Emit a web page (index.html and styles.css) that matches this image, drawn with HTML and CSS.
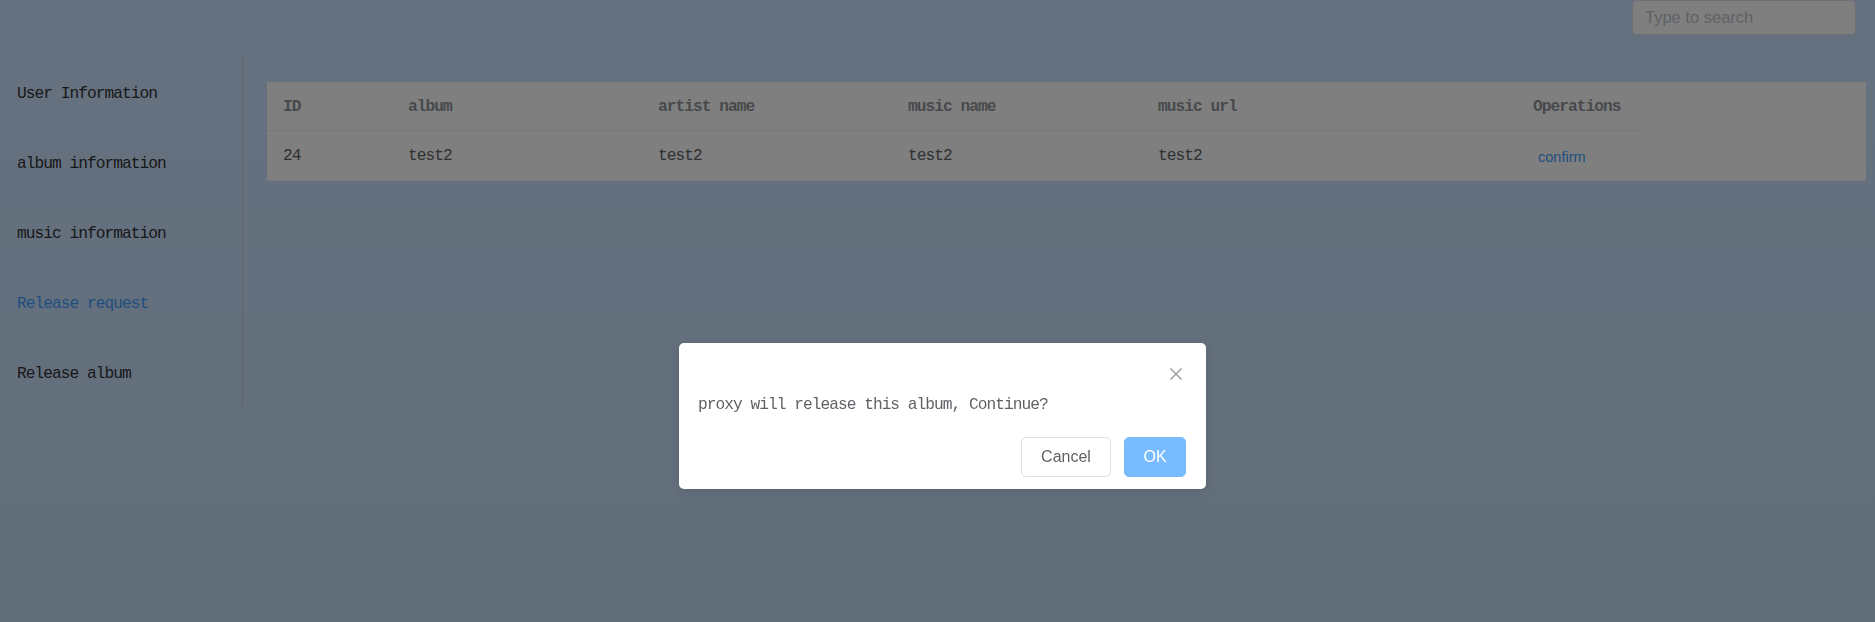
FILE: index.html
```html
<!DOCTYPE html>
<html lang="en">
<head>
<meta charset="utf-8">
<title>Release request</title>
<link rel="stylesheet" href="styles.css">
</head>
<body>
<div class="page">
  <header class="topbar">
    <input class="search" type="text" placeholder="Type to search">
  </header>
  <div class="main">
    <nav class="menu">
      <div class="menu-item">User Information</div>
      <div class="menu-item">album information</div>
      <div class="menu-item">music information</div>
      <div class="menu-item active">Release request</div>
      <div class="menu-item">Release album</div>
    </nav>
    <section class="content">
      <div class="table-wrap">
        <table class="data-table">
          <colgroup>
            <col class="c-id"><col class="c-mid"><col class="c-mid"><col class="c-mid"><col class="c-wide"><col class="c-id">
          </colgroup>
          <thead>
            <tr><th>ID</th><th>album</th><th>artist name</th><th>music name</th><th>music url</th><th>Operations</th></tr>
          </thead>
          <tbody>
            <tr><td>24</td><td>test2</td><td>test2</td><td>test2</td><td>test2</td><td><span class="link-btn">confirm</span></td></tr>
          </tbody>
        </table>
      </div>
    </section>
  </div>
</div>

<div class="overlay">
  <div class="msgbox">
    <div class="msgbox-header">
      <span class="close" aria-label="Close">
        <svg width="12" height="12" viewBox="0 0 12 12"><path d="M0.5 0.5 L11.5 11.5 M11.5 0.5 L0.5 11.5" stroke="#909399" stroke-width="1.2" fill="none"/></svg>
      </span>
    </div>
    <div class="msgbox-message">proxy will release this album, Continue?</div>
    <div class="msgbox-btns">
      <button class="btn btn-default">Cancel</button>
      <button class="btn btn-primary">OK</button>
    </div>
  </div>
</div>
</body>
</html>
```

FILE: styles.css
```css
html, body {
  margin: 0;
  padding: 0;
  height: 100%;
}
body {
  font-family: "Liberation Mono", "DejaVu Sans Mono", monospace;
  background: linear-gradient(180deg, #cbe3fe 0%, #c6dcf6 100%);
  color: #303133;
  overflow: hidden;
}
.page {
  height: 622px;
}
.topbar {
  height: 57px;
  display: flex;
  justify-content: flex-end;
  align-items: flex-start;
  padding-right: 19px;
}
.search {
  box-sizing: border-box;
  width: 224px;
  height: 35px;
  margin: 0;
  border: 1px solid #dcdfe6;
  border-radius: 5px;
  background: #fff;
  padding: 0 12px;
  font-family: "Liberation Sans", Arial, sans-serif;
  font-size: 16.5px;
  color: #606266;
  outline: none;
}
.search::placeholder {
  color: #c0c4cc;
}
.main {
  display: flex;
  align-items: flex-start;
}
.menu {
  width: 242px;
  border-right: 1px solid #bccbdd;
  display: flex;
  flex-direction: column;
}
.menu-item {
  height: 70px;
  display: flex;
  align-items: center;
  padding: 3px 0 0 17px;
  box-sizing: border-box;
  font-size: 16.2px;
  letter-spacing: -0.97px;
  color: #303133;
  white-space: nowrap;
}
.menu-item.active {
  color: #409eff;
}
.content {
  flex: 1;
  padding: 25px 9px 0 24px;
}
.table-wrap {
  background: #fff;
  border-bottom: 1px solid #ebeef5;
  height: 98px;
}
.data-table {
  border-collapse: collapse;
  table-layout: fixed;
  width: 1375px;
}
.c-id { width: 125px; }
.c-mid { width: 250px; }
.c-wide { width: 375px; }
.data-table th,
.data-table td {
  height: 48px;
  padding: 3px 0 0 16px;
  box-sizing: border-box;
  text-align: left;
  border-bottom: 1px solid #ebeef5;
  font-size: 16.2px;
  letter-spacing: -0.97px;
  white-space: nowrap;
}
.data-table th {
  color: #909399;
  font-weight: 700;
}
.data-table td {
  color: #606266;
  border-bottom: none;
}
.link-btn {
  display: inline-block;
  padding: 4px 0 0 5px;
  font-family: "Liberation Sans", Arial, sans-serif;
  font-size: 14.5px;
  letter-spacing: 0;
  color: #409eff;
}

.overlay {
  position: fixed;
  inset: 0;
  background: rgba(0, 0, 0, 0.5);
  display: flex;
  align-items: flex-start;
  justify-content: flex-start;
  padding: 343px 0 0 679px;
  box-sizing: border-box;
}
.msgbox {
  position: relative;
  width: 527px;
  box-sizing: border-box;
  background: #fff;
  border-radius: 5px;
  padding-bottom: 12px;
  box-shadow: 0 2px 12px rgba(0, 0, 0, 0.1);
}
.msgbox-header {
  height: 50px;
}
.close {
  position: absolute;
  top: 25px;
  right: 24px;
  width: 12px;
  height: 12px;
  display: block;
}
.close svg {
  display: block;
}
.msgbox-message {
  padding: 0 19px;
  height: 24px;
  line-height: 24px;
  font-size: 16.2px;
  letter-spacing: -0.97px;
  color: #606266;
  white-space: nowrap;
}
.msgbox-btns {
  margin-top: 20px;
  padding-right: 20px;
  display: flex;
  justify-content: flex-end;
  gap: 13px;
}
.btn {
  box-sizing: border-box;
  height: 40px;
  border-radius: 5px;
  font-family: "Liberation Sans", Arial, sans-serif;
  font-size: 16px;
  padding: 0;
  cursor: pointer;
}
.btn-default {
  width: 90px;
  background: #fff;
  border: 1px solid #dcdfe6;
  color: #606266;
}
.btn-primary {
  width: 62px;
  background: #79bbff;
  border: 1px solid #79bbff;
  color: #fff;
}
```
